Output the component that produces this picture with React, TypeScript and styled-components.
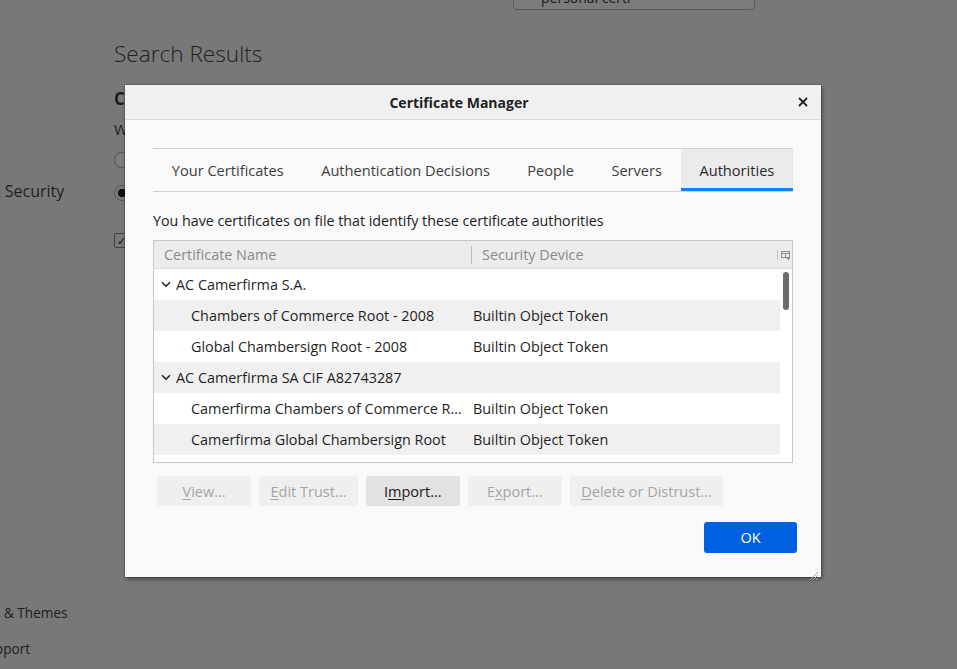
import React from "react";
import styled, { createGlobalStyle } from "styled-components";

const Global = createGlobalStyle`
  html, body { margin: 0; padding: 0; width: 100%; height: 100%; overflow: hidden; }
  body { font-family: "Open Sans", "Noto Sans", sans-serif; background: #787878; }
  #root { width: 100%; height: 100%; }
`;

const Page = styled.div`
  position: relative;
  width: 957px;
  height: 669px;
  overflow: hidden;
  background: #787878;
  display: flex;
`;

const Sidebar = styled.nav`
  flex: none;
  width: 182px;
  margin-left: -68px;
  display: flex;
  flex-direction: column;
`;

const NavItem = styled.div<{ $mt: number }>`
  margin-top: ${(p) => p.$mt}px;
  height: 24px;
  line-height: 24px;
  font-size: 16px;
  color: #1e1e1e;
  white-space: nowrap;
`;

const FooterLink = styled.div<{ $mt: number }>`
  margin-top: ${(p) => p.$mt}px;
  height: 24px;
  line-height: 24px;
  font-size: 13.6px;
  color: #1e1e1e;
  white-space: nowrap;
`;

const Main = styled.main`
  flex: none;
  width: 641px;
  display: flex;
  flex-direction: column;
  align-items: flex-start;
`;

const SearchBox = styled.div`
  align-self: flex-end;
  width: 242px;
  height: 32px;
  margin-top: -22px;
  box-sizing: border-box;
  border: 1px solid #5c5c5c;
  border-radius: 4px;
  background: #7b7b7b;
  display: flex;
  align-items: center;
  padding: 7px 10px 0 27px;
  font-size: 14px;
  color: #1a1a1a;
  gap: 8px;
`;

const SearchText = styled.span`
  flex: 1;
`;

const ClearDot = styled.span`
  width: 14px;
  height: 14px;
  margin-top: -10px;
  border-radius: 50%;
  background: #5f5f5f;
`;

const PageTitle = styled.h1`
  margin: 29px 0 0;
  font-size: 22.6px;
  line-height: 30px;
  font-weight: 300;
  color: #222;
`;

const SectionTitle = styled.h2`
  margin: 18px 0 0;
  font-size: 17px;
  line-height: 24px;
  font-weight: 700;
  color: #1a1a1a;
`;

const BgText = styled.div`
  margin-top: 6px;
  font-size: 15px;
  line-height: 24px;
  color: #1e1e1e;
`;

const OptionRow = styled.div<{ $mt: number }>`
  margin-top: ${(p) => p.$mt}px;
  display: flex;
  align-items: center;
  gap: 8px;
  font-size: 15px;
  line-height: 24px;
  color: #1e1e1e;
`;

const Radio = styled.span<{ $on?: boolean }>`
  box-sizing: border-box;
  width: 16px;
  height: 16px;
  border-radius: 50%;
  border: 1px solid #555;
  background: ${(p) => (p.$on ? "radial-gradient(circle, #111 0 4px, #7c7c7c 4.5px)" : "#7c7c7c")};
`;

const Check = styled.span`
  box-sizing: border-box;
  width: 15px;
  height: 15px;
  border: 1px solid #444;
  border-radius: 2px;
  font-size: 11px;
  line-height: 13px;
  text-align: center;
  color: #111;
`;

/* ---------- dialog ---------- */

const Dialog = styled.div`
  position: absolute;
  left: 125px;
  top: 85px;
  width: 696px;
  height: 492px;
  background: #f9f9f9;
  box-shadow: 1px 2px 4px rgba(0, 0, 0, 0.45), 0 0 0 1px rgba(0, 0, 0, 0.12);
  display: flex;
  flex-direction: column;
  color: #1c1b22;
`;

const TitleBar = styled.header`
  flex: none;
  height: 34px;
  background: #f0f0f0;
  border-bottom: 1px solid #dadada;
  display: flex;
  align-items: center;
`;

const Title = styled.div`
  flex: 1;
  text-align: center;
  font-size: 14px;
  font-weight: 700;
  color: #222;
`;

const CloseBtn = styled.div`
  width: 20px;
  height: 20px;
  margin-right: 8px;
  display: flex;
  align-items: center;
  justify-content: center;
`;

const Body = styled.div`
  flex: 1;
  padding: 28px 28px 0 28px;
  display: flex;
  flex-direction: column;
  min-height: 0;
`;

const Tabs = styled.div`
  display: flex;
  border-top: 1px solid #cfcfcf;
  border-bottom: 1px solid #cfcfcf;
`;

const Tab = styled.div<{ $active?: boolean }>`
  flex: 1 1 auto;
  height: 42px;
  padding: 0 18px;
  display: flex;
  align-items: center;
  justify-content: center;
  font-size: 14.6px;
  color: ${(p) => (p.$active ? "#2a2a2a" : "#3e3e3e")};
  background: ${(p) => (p.$active ? "#ebebeb" : "transparent")};
  box-shadow: ${(p) => (p.$active ? "inset 0 -3px 0 #0a84ff" : "none")};
  white-space: nowrap;
`;

const Description = styled.div`
  margin-top: 19px;
  font-size: 14.25px;
  line-height: 20px;
  color: #1c1b22;
`;

const Tree = styled.div`
  margin-top: 9px;
  height: 223px;
  box-sizing: border-box;
  border: 1px solid #c9c9c9;
  background: #fff;
  display: flex;
  flex-direction: column;
  overflow: hidden;
`;

const TreeHead = styled.div`
  flex: none;
  height: 27px;
  background: #ececec;
  border-bottom: 1px solid #dedede;
  display: grid;
  grid-template-columns: 317px 1fr 15px;
  align-items: center;
  font-size: 14.4px;
  color: #8a8a8a;
`;

const HeadCell = styled.div<{ $pad: number }>`
  display: flex;
  align-items: center;
  height: 100%;
  padding-left: ${(p) => p.$pad}px;
  white-space: nowrap;
`;

const Sep = styled.span`
  width: 1px;
  height: 18px;
  background: #bdbdbd;
  margin-right: 10px;
`;

const PickerCell = styled.div`
  display: flex;
  align-items: center;
  height: 100%;
`;

const TreeBody = styled.div`
  flex: 1;
  display: flex;
  min-height: 0;
`;

const Rows = styled.div`
  flex: 1;
  display: flex;
  flex-direction: column;
  overflow: hidden;
`;

const Row = styled.div<{ $alt: boolean }>`
  flex: none;
  height: 31px;
  display: grid;
  grid-template-columns: 317px 1fr;
  align-items: center;
  background: ${(p) => (p.$alt ? "#f0f0f0" : "#fff")};
  font-size: 14.4px;
  color: #1f1f1f;
`;

const NameCell = styled.div<{ $child: boolean }>`
  display: flex;
  align-items: center;
  gap: 5px;
  padding-left: ${(p) => (p.$child ? 37 : 7)}px;
  padding-right: 6px;
  white-space: nowrap;
  overflow: hidden;
  min-width: 0;
`;

const NameText = styled.span`
  overflow: hidden;
  text-overflow: ellipsis;
  min-width: 0;
`;

const DeviceCell = styled.div`
  padding-left: 2px;
  white-space: nowrap;
`;

const ScrollTrack = styled.div`
  flex: none;
  width: 12px;
  padding-top: 3px;
  display: flex;
  justify-content: center;
`;

const Thumb = styled.div`
  width: 6px;
  height: 38px;
  border-radius: 3px;
  background: #6b6b6b;
`;

const Buttons = styled.div`
  margin-top: 13px;
  margin-left: 4px;
  display: flex;
  gap: 8px;
`;

const Btn = styled.div<{ $disabled?: boolean }>`
  box-sizing: border-box;
  height: 30px;
  min-width: 94px;
  padding: 0 11.5px;
  border-radius: 3px;
  display: flex;
  align-items: center;
  justify-content: center;
  font-size: 14.5px;
  white-space: nowrap;
  background: ${(p) => (p.$disabled ? "#efefef" : "#e2e2e2")};
  color: ${(p) => (p.$disabled ? "#a5a5a5" : "#1a1a1a")};
`;

const Key = styled.span`
  text-decoration: underline;
  text-underline-offset: 2px;
`;

const Footer = styled.div`
  margin-top: 16px;
  margin-right: -4px;
  display: flex;
  justify-content: flex-end;
`;

const OkBtn = styled.div`
  width: 93px;
  height: 31px;
  border-radius: 3px;
  background: #0061e0;
  color: #fff;
  font-size: 14.5px;
  display: flex;
  align-items: center;
  justify-content: center;
`;

const Grip = styled.div`
  position: absolute;
  right: 2px;
  bottom: 1px;
  width: 12px;
  height: 12px;
`;

const Chevron = () => (
  <svg width="10" height="7" viewBox="0 0 10 7">
    <path d="M1 1.2 L5 5.2 L9 1.2" fill="none" stroke="#222" strokeWidth="1.6" />
  </svg>
);

type RowData = { name: string; device?: string; child: boolean };

const rows: RowData[] = [
  { name: "AC Camerfirma S.A.", child: false },
  { name: "Chambers of Commerce Root - 2008", device: "Builtin Object Token", child: true },
  { name: "Global Chambersign Root - 2008", device: "Builtin Object Token", child: true },
  { name: "AC Camerfirma SA CIF A82743287", child: false },
  { name: "Camerfirma Chambers of Commerce Root", device: "Builtin Object Token", child: true },
  { name: "Camerfirma Global Chambersign Root", device: "Builtin Object Token", child: true },
  { name: "AC Camerfirma SA CIF A82743287", device: "", child: false },
];

export default function App() {
  return (
    <Page>
      <Global />
      <Sidebar>
        <NavItem $mt={179}>Privacy &amp; Security</NavItem>
        <FooterLink $mt={398}>Extensions &amp; Themes</FooterLink>
        <FooterLink $mt={12}>Firefox Support</FooterLink>
      </Sidebar>
      <Main>
        <SearchBox>
          <SearchText>personal certi</SearchText>
          <ClearDot />
        </SearchBox>
        <PageTitle>Search Results</PageTitle>
        <SectionTitle>Certificates</SectionTitle>
        <BgText>When a server requests your personal certificate</BgText>
        <OptionRow $mt={7}>
          <Radio />
          Select one automatically
        </OptionRow>
        <OptionRow $mt={9}>
          <Radio $on />
          Ask you every time
        </OptionRow>
        <OptionRow $mt={23}>
          <Check>✓</Check>
          Query OCSP responder servers to confirm the current validity of certificates
        </OptionRow>
      </Main>

      <Dialog>
        <TitleBar>
          <Title>Certificate Manager</Title>
          <CloseBtn>
            <svg width="10" height="10" viewBox="0 0 10 10">
              <path d="M1 1 L9 9 M9 1 L1 9" stroke="#222" strokeWidth="1.8" />
            </svg>
          </CloseBtn>
        </TitleBar>
        <Body>
          <Tabs>
            <Tab>Your Certificates</Tab>
            <Tab>Authentication Decisions</Tab>
            <Tab>People</Tab>
            <Tab>Servers</Tab>
            <Tab $active>Authorities</Tab>
          </Tabs>
          <Description>You have certificates on file that identify these certificate authorities</Description>
          <Tree>
            <TreeHead>
              <HeadCell $pad={10}>Certificate Name</HeadCell>
              <HeadCell $pad={0}>
                <Sep />
                Security Device
              </HeadCell>
              <PickerCell>
                <svg width="14" height="12" viewBox="0 0 14 12">
                  <path d="M0.5 1 V11" stroke="#c2c2c2" strokeWidth="1" />
                  <rect x="4.5" y="2.5" width="8" height="6" fill="none" stroke="#8a8a8a" strokeWidth="1" />
                  <path d="M4.5 4.5 H12.5 M8.5 4.5 V8.5" stroke="#8a8a8a" strokeWidth="1" />
                  <path d="M9.5 9 L13 9 L11.25 11 Z" fill="#777" />
                </svg>
              </PickerCell>
            </TreeHead>
            <TreeBody>
              <Rows>
                {rows.map((r, i) => (
                  <Row key={i} $alt={i % 2 === 1}>
                    <NameCell $child={r.child}>
                      {!r.child && <Chevron />}
                      <NameText>{r.name}</NameText>
                    </NameCell>
                    <DeviceCell>{r.device}</DeviceCell>
                  </Row>
                ))}
              </Rows>
              <ScrollTrack>
                <Thumb />
              </ScrollTrack>
            </TreeBody>
          </Tree>
          <Buttons>
            <Btn $disabled>
              <Key>V</Key>iew…
            </Btn>
            <Btn $disabled>
              <Key>E</Key>dit Trust…
            </Btn>
            <Btn>
              I<Key>m</Key>port…
            </Btn>
            <Btn $disabled>
              E<Key>x</Key>port…
            </Btn>
            <Btn $disabled>
              <Key>D</Key>elete or Distrust…
            </Btn>
          </Buttons>
          <Footer>
            <OkBtn>OK</OkBtn>
          </Footer>
        </Body>
        <Grip>
          <svg width="12" height="12" viewBox="0 0 12 12">
            <path d="M11 3 L3 11 M11 6 L6 11 M11 9 L9 11" stroke="#a9a9a9" strokeWidth="1" />
          </svg>
        </Grip>
      </Dialog>
    </Page>
  );
}
